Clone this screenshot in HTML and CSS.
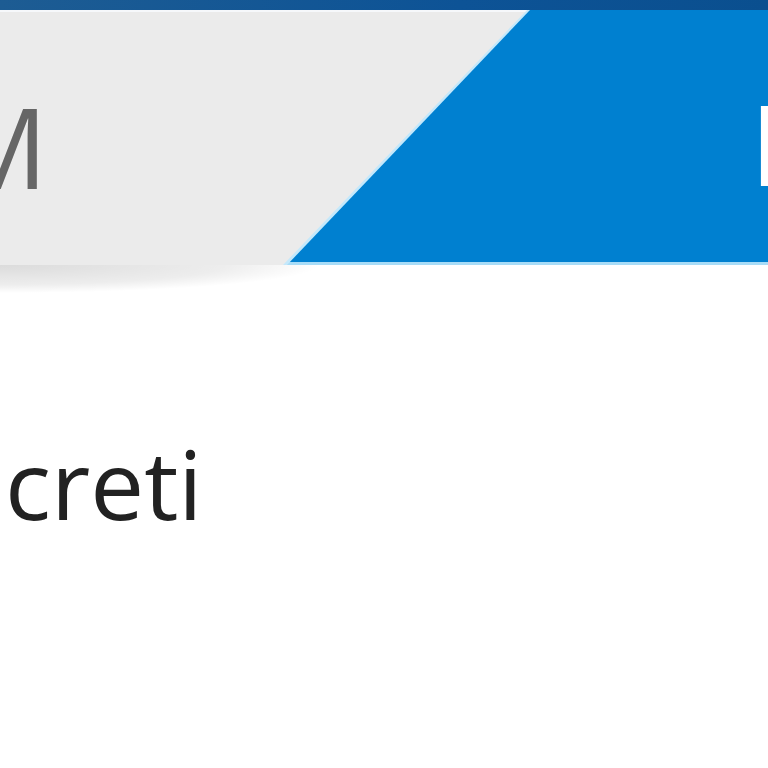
FILE: index.html
```html
<!DOCTYPE html>
<html lang="it">
<head>
  <meta charset="UTF-8" />
  <meta name="viewport" content="width=device-width, initial-scale=1.0" />
  <title>Menu</title>
  <link rel="stylesheet" href="styles.css">
</head>
<body>

  <div class="top-strip"></div>

  <header>
    <div class="tab-wrap">
      <div class="tab-active">
        <span class="tab-label">M</span>
      </div>
    </div>
    <div class="tab-other">
      <span class="tab-label-light">E</span>
    </div>
  </header>

  <div class="container">
    <p class="title">creti</p>
  </div>

</body>
</html>
```

FILE: styles.css
```css
* {
  margin: 0;
  padding: 0;
  box-sizing: border-box;
  font-family: 'Open Sans', sans-serif;
}

body {
  width: 768px;
  height: 768px;
  overflow: hidden;
  background-color: #fff;
  color: #222;
}

.top-strip {
  height: 10px;
  background: linear-gradient(to right, #1d5c93, #0d5396 60%, #0a4f8f);
}

header {
  height: 255px;
  display: flex;
  background-color: #0080d0;
  border-bottom: 3px solid #a8dcf7;
}

.tab-wrap {
  width: 530px;
  flex-shrink: 0;
  height: 255px;
  background-color: #c4e8fb;
  clip-path: polygon(0 0, 530px 0, 287px 100%, 0 100%);
}

.tab-active {
  width: 527px;
  height: 100%;
  background-color: #ebebeb;
  border-top: 2px solid #f6f8fb;
  clip-path: polygon(0 0, 527px 0, 283px 100%, 0 100%);
  display: flex;
  align-items: center;
  overflow: hidden;
}

.tab-label {
  font-size: 112px;
  color: #666;
  margin-left: -53px;
  line-height: 1;
  margin-top: 14px;
}

.tab-other {
  flex: 1;
  display: flex;
  align-items: center;
  overflow: hidden;
  padding-left: 220px;
}

.tab-label-light {
  font-size: 112px;
  color: #fff;
  line-height: 1;
  margin-top: 14px;
}

.container {
  padding-top: 170px;
  background: radial-gradient(ellipse 320px 28px at 0 0, rgba(0, 0, 0, 0.14), rgba(0, 0, 0, 0.07) 70%, rgba(0, 0, 0, 0)) no-repeat;
}

.title {
  font-size: 96px;
  line-height: 1;
  margin-left: 5px;
}
```
